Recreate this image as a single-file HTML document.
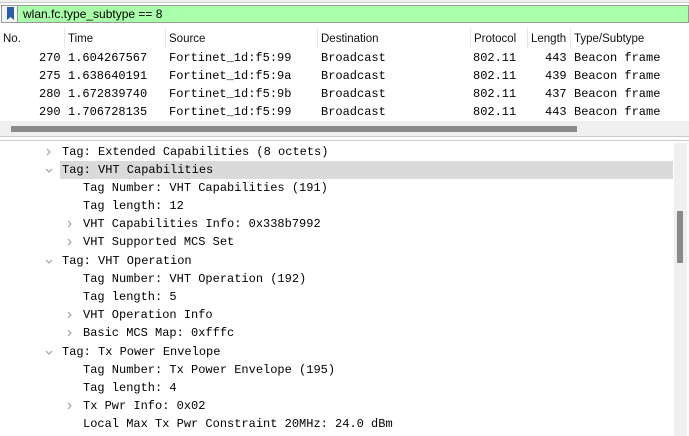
<!DOCTYPE html>
<html><head><meta charset="utf-8"><style>
*{margin:0;padding:0;box-sizing:border-box}
body{width:689px;height:436px;overflow:hidden;background:#fff;position:relative;font-family:"Liberation Sans",sans-serif}
.abs{position:absolute}
.mono{font-family:"Liberation Mono",monospace;font-size:12px;color:#000;white-space:pre}
.hd{font-size:11.5px;color:#111;position:absolute;top:33px}
.sep{position:absolute;top:28px;width:1px;height:20px;background:#e8e8e8}
.r{position:absolute;height:18px;line-height:18px}
.ar{position:absolute;width:7px;height:7px}
</style></head><body>
<div class="abs" style="left:0;top:0;width:689px;height:3px;background:#f0f0f0;border-bottom:1px solid #ccc"></div>
<div class="abs" style="left:1px;top:5px;width:688px;height:18px;border:1px solid #999;background:#aaffaa"></div>
<div class="abs" style="left:2px;top:6px;width:16px;height:16px;background:#f4f4f4;border-right:1px solid #999"></div>
<svg class="abs" style="left:6px;top:7px" width="9" height="14"><path d="M1 0H8V13L4.5 10L1 13Z" fill="#2a5ea8"/></svg>
<div class="abs" style="left:23px;top:6px;font-size:12px;line-height:16px;color:#000">wlan.fc.type_subtype == 8</div>
<div class="hd" style="left:3px">No.</div><div class="sep" style="left:64px"></div>
<div class="hd" style="left:68px">Time</div><div class="sep" style="left:165px"></div>
<div class="hd" style="left:169px">Source</div><div class="sep" style="left:317px"></div>
<div class="hd" style="left:321px">Destination</div><div class="sep" style="left:470px"></div>
<div class="hd" style="left:474px">Protocol</div><div class="sep" style="left:527px"></div>
<div class="hd" style="left:531px">Length</div><div class="sep" style="left:570px"></div>
<div class="hd" style="left:574px">Type/Subtype</div>
<div class="abs mono" style="left:0;top:49px;line-height:18px">
<div style="position:absolute;left:39px;top:0">270<br>275<br>280<br>290</div>
<div style="position:absolute;left:68px;top:0">1.604267567<br>1.638640191<br>1.672839740<br>1.706728135</div>
<div style="position:absolute;left:169px;top:0">Fortinet_1d:f5:99<br>Fortinet_1d:f5:9a<br>Fortinet_1d:f5:9b<br>Fortinet_1d:f5:99</div>
<div style="position:absolute;left:321px;top:0">Broadcast<br>Broadcast<br>Broadcast<br>Broadcast</div>
<div style="position:absolute;left:473px;top:0">802.11<br>802.11<br>802.11<br>802.11</div>
<div style="position:absolute;left:545px;top:0">443<br>439<br>437<br>443</div>
<div style="position:absolute;left:574px;top:0">Beacon frame<br>Beacon frame<br>Beacon frame<br>Beacon frame</div>
</div>
<div class="abs" style="left:0;top:121px;width:689px;height:15px;background:#f0f0f0"></div>
<div class="abs" style="left:11px;top:126px;width:566px;height:6px;background:#8a8a8a"></div>
<div class="abs" style="left:0;top:136px;width:689px;height:1px;background:#ccc"></div>
<div class="abs" style="left:0;top:140px;width:689px;height:1px;background:#ccc"></div>
<div class="abs" style="left:674px;top:143px;width:13px;height:293px;background:#efefef"></div>
<div class="abs" style="left:677px;top:211px;width:6px;height:52px;background:#8a8a8a"></div>
<div class="abs" style="left:60px;top:161px;width:613px;height:18px;background:#dadada"></div>
<svg class="abs" style="left:0;top:0" width="100" height="436" fill="none" stroke="#999" stroke-width="1">
<path d="M47 149l3 3-3 3"/>
<path d="M46 169l3 3 3-3"/>
<path d="M68 221l3 3-3 3"/>
<path d="M68 239l3 3-3 3"/>
<path d="M46 260l3 3 3-3"/>
<path d="M68 312l3 3-3 3"/>
<path d="M68 330l3 3-3 3"/>
<path d="M46 351l3 3 3-3"/>
<path d="M68 403l3 3-3 3"/>
</svg>
<div class="mono">
<div class="r" style="left:62px;top:143px">Tag: Extended Capabilities (8 octets)</div>
<div class="r" style="left:62px;top:161px">Tag: VHT Capabilities</div>
<div class="r" style="left:83px;top:179px">Tag Number: VHT Capabilities (191)</div>
<div class="r" style="left:83px;top:197px">Tag length: 12</div>
<div class="r" style="left:83px;top:215px">VHT Capabilities Info: 0x338b7992</div>
<div class="r" style="left:83px;top:233px">VHT Supported MCS Set</div>
<div class="r" style="left:62px;top:252px">Tag: VHT Operation</div>
<div class="r" style="left:83px;top:270px">Tag Number: VHT Operation (192)</div>
<div class="r" style="left:83px;top:288px">Tag length: 5</div>
<div class="r" style="left:83px;top:306px">VHT Operation Info</div>
<div class="r" style="left:83px;top:324px">Basic MCS Map: 0xfffc</div>
<div class="r" style="left:62px;top:343px">Tag: Tx Power Envelope</div>
<div class="r" style="left:83px;top:361px">Tag Number: Tx Power Envelope (195)</div>
<div class="r" style="left:83px;top:379px">Tag length: 4</div>
<div class="r" style="left:83px;top:397px">Tx Pwr Info: 0x02</div>
<div class="r" style="left:83px;top:415px">Local Max Tx Pwr Constraint 20MHz: 24.0 dBm</div>
</div>
</body></html>
